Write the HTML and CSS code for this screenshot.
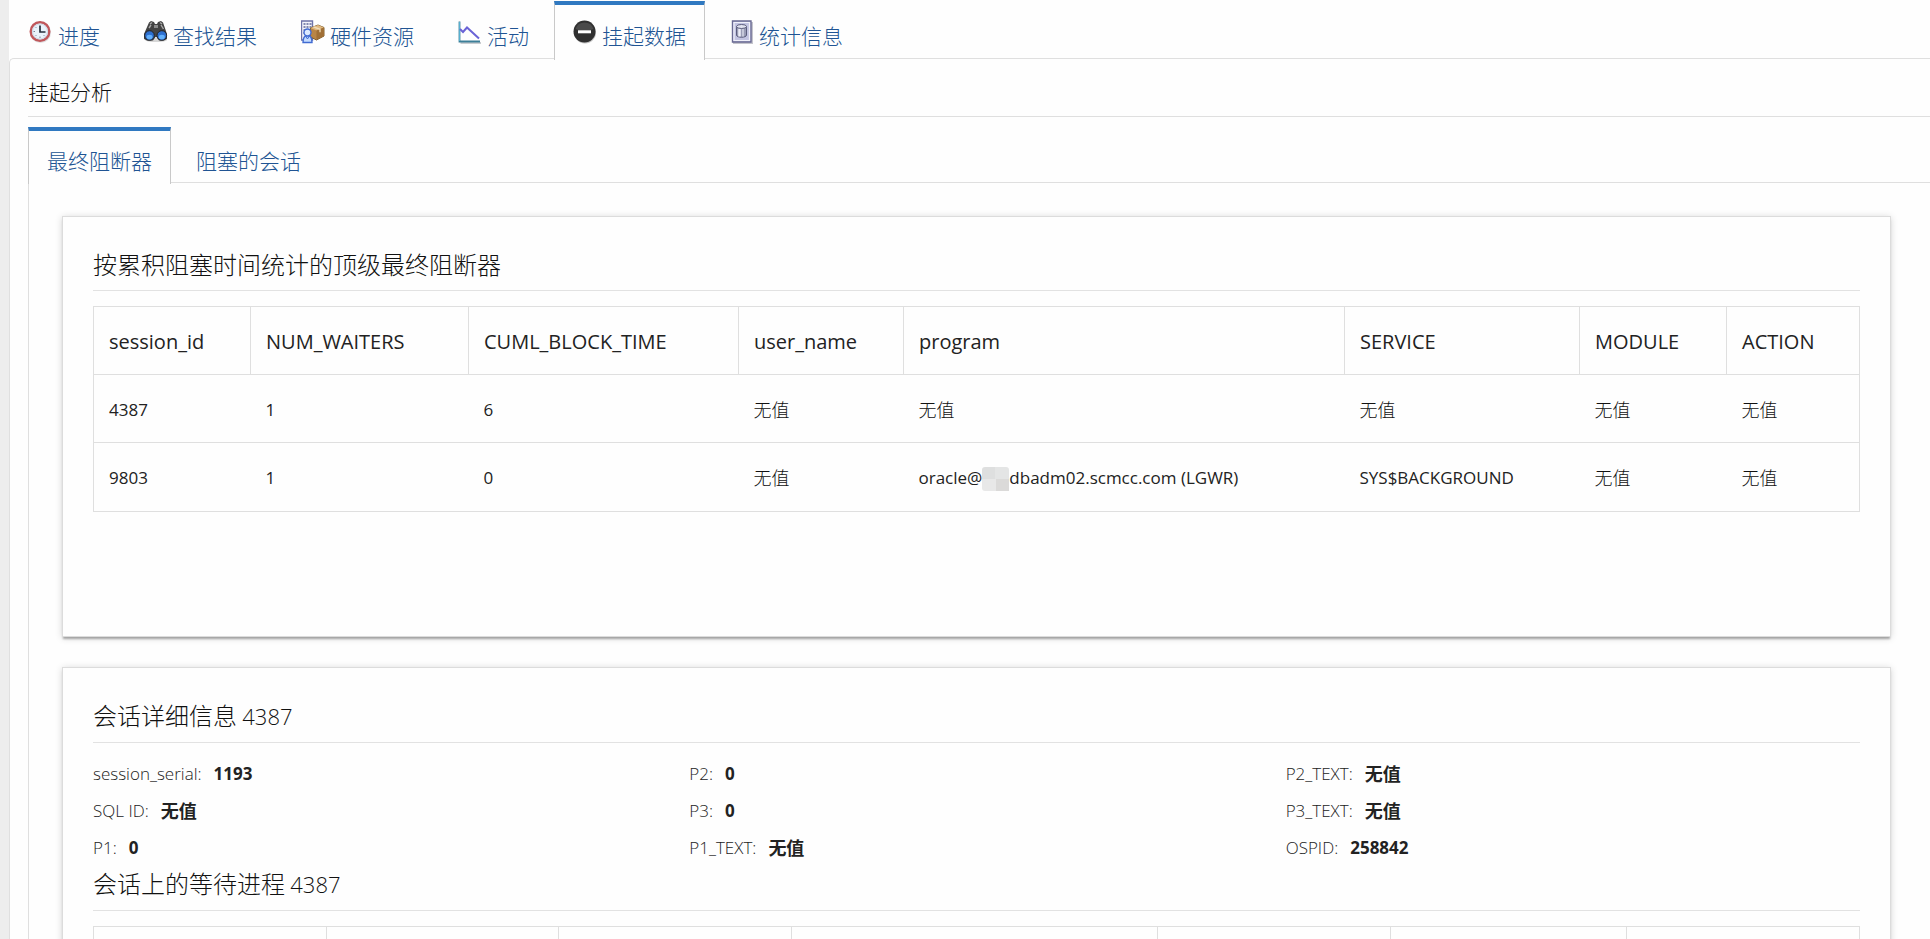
FILE: index.html
```html
<!DOCTYPE html>
<html lang="zh-CN">
<head>
<meta charset="utf-8">
<title>挂起数据</title>
<link rel="stylesheet" href="styles.css">
</head>
<body>
<div class="page">
  <nav class="tabs main-tabs">
    <a class="tab" href="#progress">
      <svg class="icon" viewBox="0 0 24 24" aria-hidden="true">
        <circle cx="11.500" cy="12.500" r="10.500" fill="#c9c9cd" opacity=".6"/>
        <circle cx="11" cy="11.500" r="9.300" fill="#eaf3fb" stroke="#c0575b" stroke-width="2.400"/>
        <circle cx="11" cy="11.500" r="7.500" fill="none" stroke="#cfd9e6" stroke-width="1"/>
        <path d="M11 5.500v6.500h5.500" fill="none" stroke="#26303c" stroke-width="1.700"/>
        <path d="M4.500 11.500H6M11 18v-1.500M6.500 7l.8.8M6.500 16l.8-.8M15.500 16l-.8-.8" stroke="#7a8698" stroke-width="1"/>
      </svg>
      <span>进度</span>
    </a>
    <a class="tab" href="#findings">
      <svg class="icon" viewBox="0 0 24 24" aria-hidden="true">
        <ellipse cx="12" cy="20" rx="11" ry="2" fill="#bbb" opacity=".6"/>
        <path d="M5 2.500L7 1l3 1 1 2h2l1-2 3-1 2 1.500L23 14v5l-3 1.500h-5L12.500 17h-1L9 20.500H3L0 19v-5z" fill="#434343"/>
        <path d="M6 4l2-1.500M16 2.500L18 4M5 8l2-3M17 5l2.500 4" stroke="#a9a9a9" stroke-width="1.400"/>
        <path d="M10 5h4v3h-4z" fill="#8b8b8b"/>
        <circle cx="5.500" cy="15.500" r="4.800" fill="#2c6fd0" stroke="#222" stroke-width="1"/>
        <circle cx="17.800" cy="15.500" r="4.800" fill="#2c6fd0" stroke="#222" stroke-width="1"/>
        <ellipse cx="5.500" cy="17" rx="3" ry="2.300" fill="#62b0fb"/>
        <ellipse cx="17.800" cy="17" rx="3" ry="2.300" fill="#62b0fb"/>
      </svg>
      <span>查找结果</span>
    </a>
    <a class="tab" href="#hardware">
      <svg class="icon" viewBox="1 0 24 24" aria-hidden="true">
        <path d="M1.500 1h11v19h-11z" fill="#f3f4fb" stroke="#6d73a8" stroke-width="1.400"/>
        <path d="M3.500 4h2M6.500 4h2M9.500 4h2M3.500 7h2M6.500 7h2M9.500 7h2M3.500 10h2M3.500 13h2" stroke="#5f6698" stroke-width="1.600"/>
        <path d="M10.500 8l7.500-3 6 2.500V16l-7.500 4-6-3z" fill="#b98545" stroke="#80602f" stroke-width="1"/>
        <path d="M10.500 8l7.500-3 6 2.500-7.500 3z" fill="#e0b880"/>
        <path d="M16.500 10.500l7.500-3V16l-7.500 4z" fill="#a06f35"/>
        <path d="M13.500 6.800l6.500 2.500v3" fill="none" stroke="#f0ddb8" stroke-width="1.300"/>
        <path d="M3 22.500c0-6 2-7 4.500-7s4.500 1 4.500 7z" fill="#c4dcff" stroke="#416bd2" stroke-width="1.400"/>
        <circle cx="7.500" cy="12.500" r="3.500" fill="#dceaff" stroke="#416bd2" stroke-width="1.400"/>
        <path d="M6 16.500L7.500 19 9 16.500" fill="none" stroke="#416bd2" stroke-width="1"/>
      </svg>
      <span>硬件资源</span>
    </a>
    <a class="tab" href="#activity">
      <svg class="icon" viewBox="0 0 24 24" aria-hidden="true">
        <path d="M2.500 23H23" stroke="#b9bdc0" stroke-width="1.500"/>
        <path d="M1.500 1.500v20H22" fill="none" stroke="#3c7f98" stroke-width="1.800"/>
        <path d="M1.500 2v19" stroke="#55b0d0" stroke-width="1"/>
        <path d="M2 9l3 3 4-4.500L21 18.500" fill="none" stroke="#6a63d6" stroke-width="2"/>
      </svg>
      <span>活动</span>
    </a>
    <a class="tab active" href="#hang" aria-current="page">
      <svg class="icon" viewBox="0 0 24 24" aria-hidden="true">
        <circle cx="12" cy="12.500" r="11" fill="#aaa" opacity=".7"/>
        <circle cx="11.500" cy="11.500" r="11" fill="#303030"/>
        <path d="M2.500 9a9.500 9.500 0 0118 0q-9 4-18 0z" fill="#4a4a4a"/>
        <path d="M5 10.300h13v3H5z" fill="#fff"/>
      </svg>
      <span>挂起数据</span>
    </a>
    <a class="tab" href="#stats">
      <svg class="icon" viewBox="0 0 24 24" aria-hidden="true">
        <path d="M3 2h20v22H3z" fill="#c4c4cc"/>
        <path d="M2.500 1h18.500v21H2.500z" fill="#c3c4e2" stroke="#6a6a93" stroke-width="1.400"/>
        <path d="M4 2.500h15.500v18H4z" fill="none" stroke="#f0f0fa" stroke-width="1.200"/>
        <path d="M6.500 6.500v8.500c0 3 10 3 10 0V6.500z" fill="#9a9cb6" stroke="#5b5d7d" stroke-width="1"/>
        <path d="M9.500 8v8.500" stroke="#eeeff8" stroke-width="2.500"/>
        <path d="M13 8v8.500" stroke="#c6c8da" stroke-width="2"/>
        <ellipse cx="11.500" cy="6.500" rx="5" ry="2" fill="#e2e3f0" stroke="#5b5d7d" stroke-width="1"/>
      </svg>
      <span>统计信息</span>
    </a>
  </nav>

  <main class="panel">
    <h1 class="panel-title">挂起分析</h1>
    <nav class="tabs sub-tabs">
      <a class="tab active" href="#final" aria-current="page">最终阻断器</a>
      <a class="tab" href="#blocked">阻塞的会话</a>
    </nav>
    <div class="sub-panel">
      <section class="card summary">
        <h2 class="card-title">按累积阻塞时间统计的顶级最终阻断器</h2>
        <table class="grid blockers">
          <thead>
            <tr><th>session_id</th><th>NUM_WAITERS</th><th>CUML_BLOCK_TIME</th><th>user_name</th><th>program</th><th>SERVICE</th><th>MODULE</th><th>ACTION</th></tr>
          </thead>
          <tbody>
            <tr><td>4387</td><td>1</td><td>6</td><td class="none">无值</td><td class="none">无值</td><td class="none">无值</td><td class="none">无值</td><td class="none">无值</td></tr>
            <tr><td>9803</td><td>1</td><td>0</td><td class="none">无值</td><td>oracle@<span class="mask"></span>dbadm02.scmcc.com (LGWR)</td><td>SYS$BACKGROUND</td><td class="none">无值</td><td class="none">无值</td></tr>
          </tbody>
        </table>
      </section>

      <section class="card">
        <h2 class="card-title compact">会话详细信息 <span class="num">4387</span></h2>
        <dl class="details">
          <div><dt>session_serial:</dt><dd>1193</dd></div>
          <div><dt>SQL ID:</dt><dd class="none">无值</dd></div>
          <div><dt>P1:</dt><dd>0</dd></div>
          <div><dt>P2:</dt><dd>0</dd></div>
          <div><dt>P3:</dt><dd>0</dd></div>
          <div><dt>P1_TEXT:</dt><dd class="none">无值</dd></div>
          <div><dt>P2_TEXT:</dt><dd class="none">无值</dd></div>
          <div><dt>P3_TEXT:</dt><dd class="none">无值</dd></div>
          <div><dt>OSPID:</dt><dd>258842</dd></div>
        </dl>
        <h2 class="card-title">会话上的等待进程 <span class="num">4387</span></h2>
        <table class="grid waiters">
          <thead>
            <tr><th></th><th></th><th></th><th></th><th></th><th></th><th></th></tr>
          </thead>
        </table>
      </section>
    </div>
  </main>
</div>
</body>
</html>
```
FILE: styles.css
```css
* {
  box-sizing: border-box;
}

body {
  margin: 0;
  height: 100vh;
  overflow: hidden;
  background: #ededed;
  color: #222;
  font-family: "Open Sans", "Noto Sans", "Noto Sans CJK SC", sans-serif;
  font-size: 17px;
  font-weight: 400;
}

.page {
  min-height: 100%;
  margin-left: 9px;
  padding-top: 1px;
  background: #fefefe;
}

/* Tabs */
.tabs {
  display: flex;
  gap: 6px;
}

.main-tabs {
  padding-left: 1px;
}

.tab {
  display: flex;
  align-items: center;
  gap: 5px;
  height: 59px;
  margin-bottom: -2px;
  padding: 4px 18px 0;
  border: 1px solid transparent;
  border-top: 4px solid transparent;
  border-bottom: 0;
  color: #205493;
  font-family: "Noto Sans CJK SC", sans-serif;
  font-size: 21px;
  font-weight: 300;
  line-height: 32px;
  text-decoration: none;
}

.tab.active {
  position: relative;
  background: #fefefe;
  border-color: #c9c9c9;
  border-top-color: #3079c1;
}

.icon {
  width: 24px;
  height: 24px;
  margin-bottom: 5px;
}

.panel {
  padding: 15px 0 0 18px;
  border: 1px solid #dfdfdf;
  border-right: 0;
  border-radius: 5px 0 0 0;
}

.panel-title {
  margin: 0 0 10px;
  padding-bottom: 8px;
  border-bottom: 1px solid #dfdfdf;
  color: #111;
  font-family: "Noto Sans CJK SC", sans-serif;
  font-size: 21px;
  font-weight: 300;
  line-height: 34px;
}

.sub-tabs .tab {
  height: 57px;
}

.sub-panel {
  display: flex;
  flex-direction: column;
  gap: 30px;
  padding: 33px 39px 30px 33px;
  border: 1px solid #dfdfdf;
  border-right: 0;
}

/* Cards */
.card {
  padding: 30px;
  border: 1px solid #dcdcdc;
  background: #fefefe;
  box-shadow: 0 3px 2px -1px rgba(0, 0, 0, 0.3), 0 1px 7px rgba(0, 0, 0, 0.16);
}

.summary {
  min-height: 421px;
}

.card-title {
  margin: 0 0 15px;
  padding-bottom: 9px;
  border-bottom: 1px solid #e2e2e2;
  color: #111;
  font-family: "Noto Sans CJK SC", sans-serif;
  font-size: 24px;
  font-weight: 300;
  line-height: 34px;
}

.card-title.compact {
  margin-bottom: 12px;
}

.num {
  font-family: "Open Sans", "Noto Sans", sans-serif;
  font-size: 22px;
}

.none {
  font-family: "Noto Sans CJK SC", sans-serif;
  font-size: 18px;
}

/* Tables */
.grid {
  width: 100%;
  border: 1px solid #dfdfdf;
  border-collapse: collapse;
  table-layout: fixed;
}

.grid th,
.grid td {
  height: 68px;
  padding: 2px 15px 0;
  border-bottom: 1px solid #dfdfdf;
  font-weight: 400;
  line-height: 24px;
  text-align: left;
  white-space: nowrap;
}

.grid td.none {
  padding-top: 0;
  font-weight: 300;
  color: #111;
}

.grid th {
  border-right: 1px solid #dfdfdf;
  font-size: 20px;
}

.blockers tr:last-child td {
  height: 69px;
}

.blockers th:nth-child(1) { width: 157px; }
.blockers th:nth-child(2) { width: 218px; }
.blockers th:nth-child(3) { width: 270px; }
.blockers th:nth-child(4) { width: 165px; }
.blockers th:nth-child(5) { width: 441px; }
.blockers th:nth-child(6) { width: 235px; }
.blockers th:nth-child(7) { width: 147px; }
.blockers th:nth-child(8) { width: 133px; }

.waiters th { width: 233px; }
.waiters th:nth-child(2) { width: 232px; }
.waiters th:nth-child(4) { width: 366px; }
.waiters th:nth-child(6) { width: 236px; }

.mask {
  display: inline-block;
  width: 27px;
  height: 24px;
  margin: -4px 0;
  vertical-align: middle;
  border-radius: 3px 3px 0 3px;
  background: conic-gradient(#e4e5e5 25%, #dbdad9 0 50%, #e8e8e8 0 75%, #dedfdf 0);
}

/* Session details */
.details {
  display: grid;
  grid-template-columns: repeat(3, 1fr);
  grid-template-rows: repeat(3, 37px);
  grid-auto-flow: column;
  column-gap: 22px;
  margin: 0;
}

.details div {
  display: flex;
  align-items: center;
  gap: 12px;
  line-height: 24px;
}

.details dt {
  font-weight: 300;
}

.details dd {
  margin: 0;
  font-weight: 700;
}

.details dd.none {
  margin-bottom: 2px;
}
```
